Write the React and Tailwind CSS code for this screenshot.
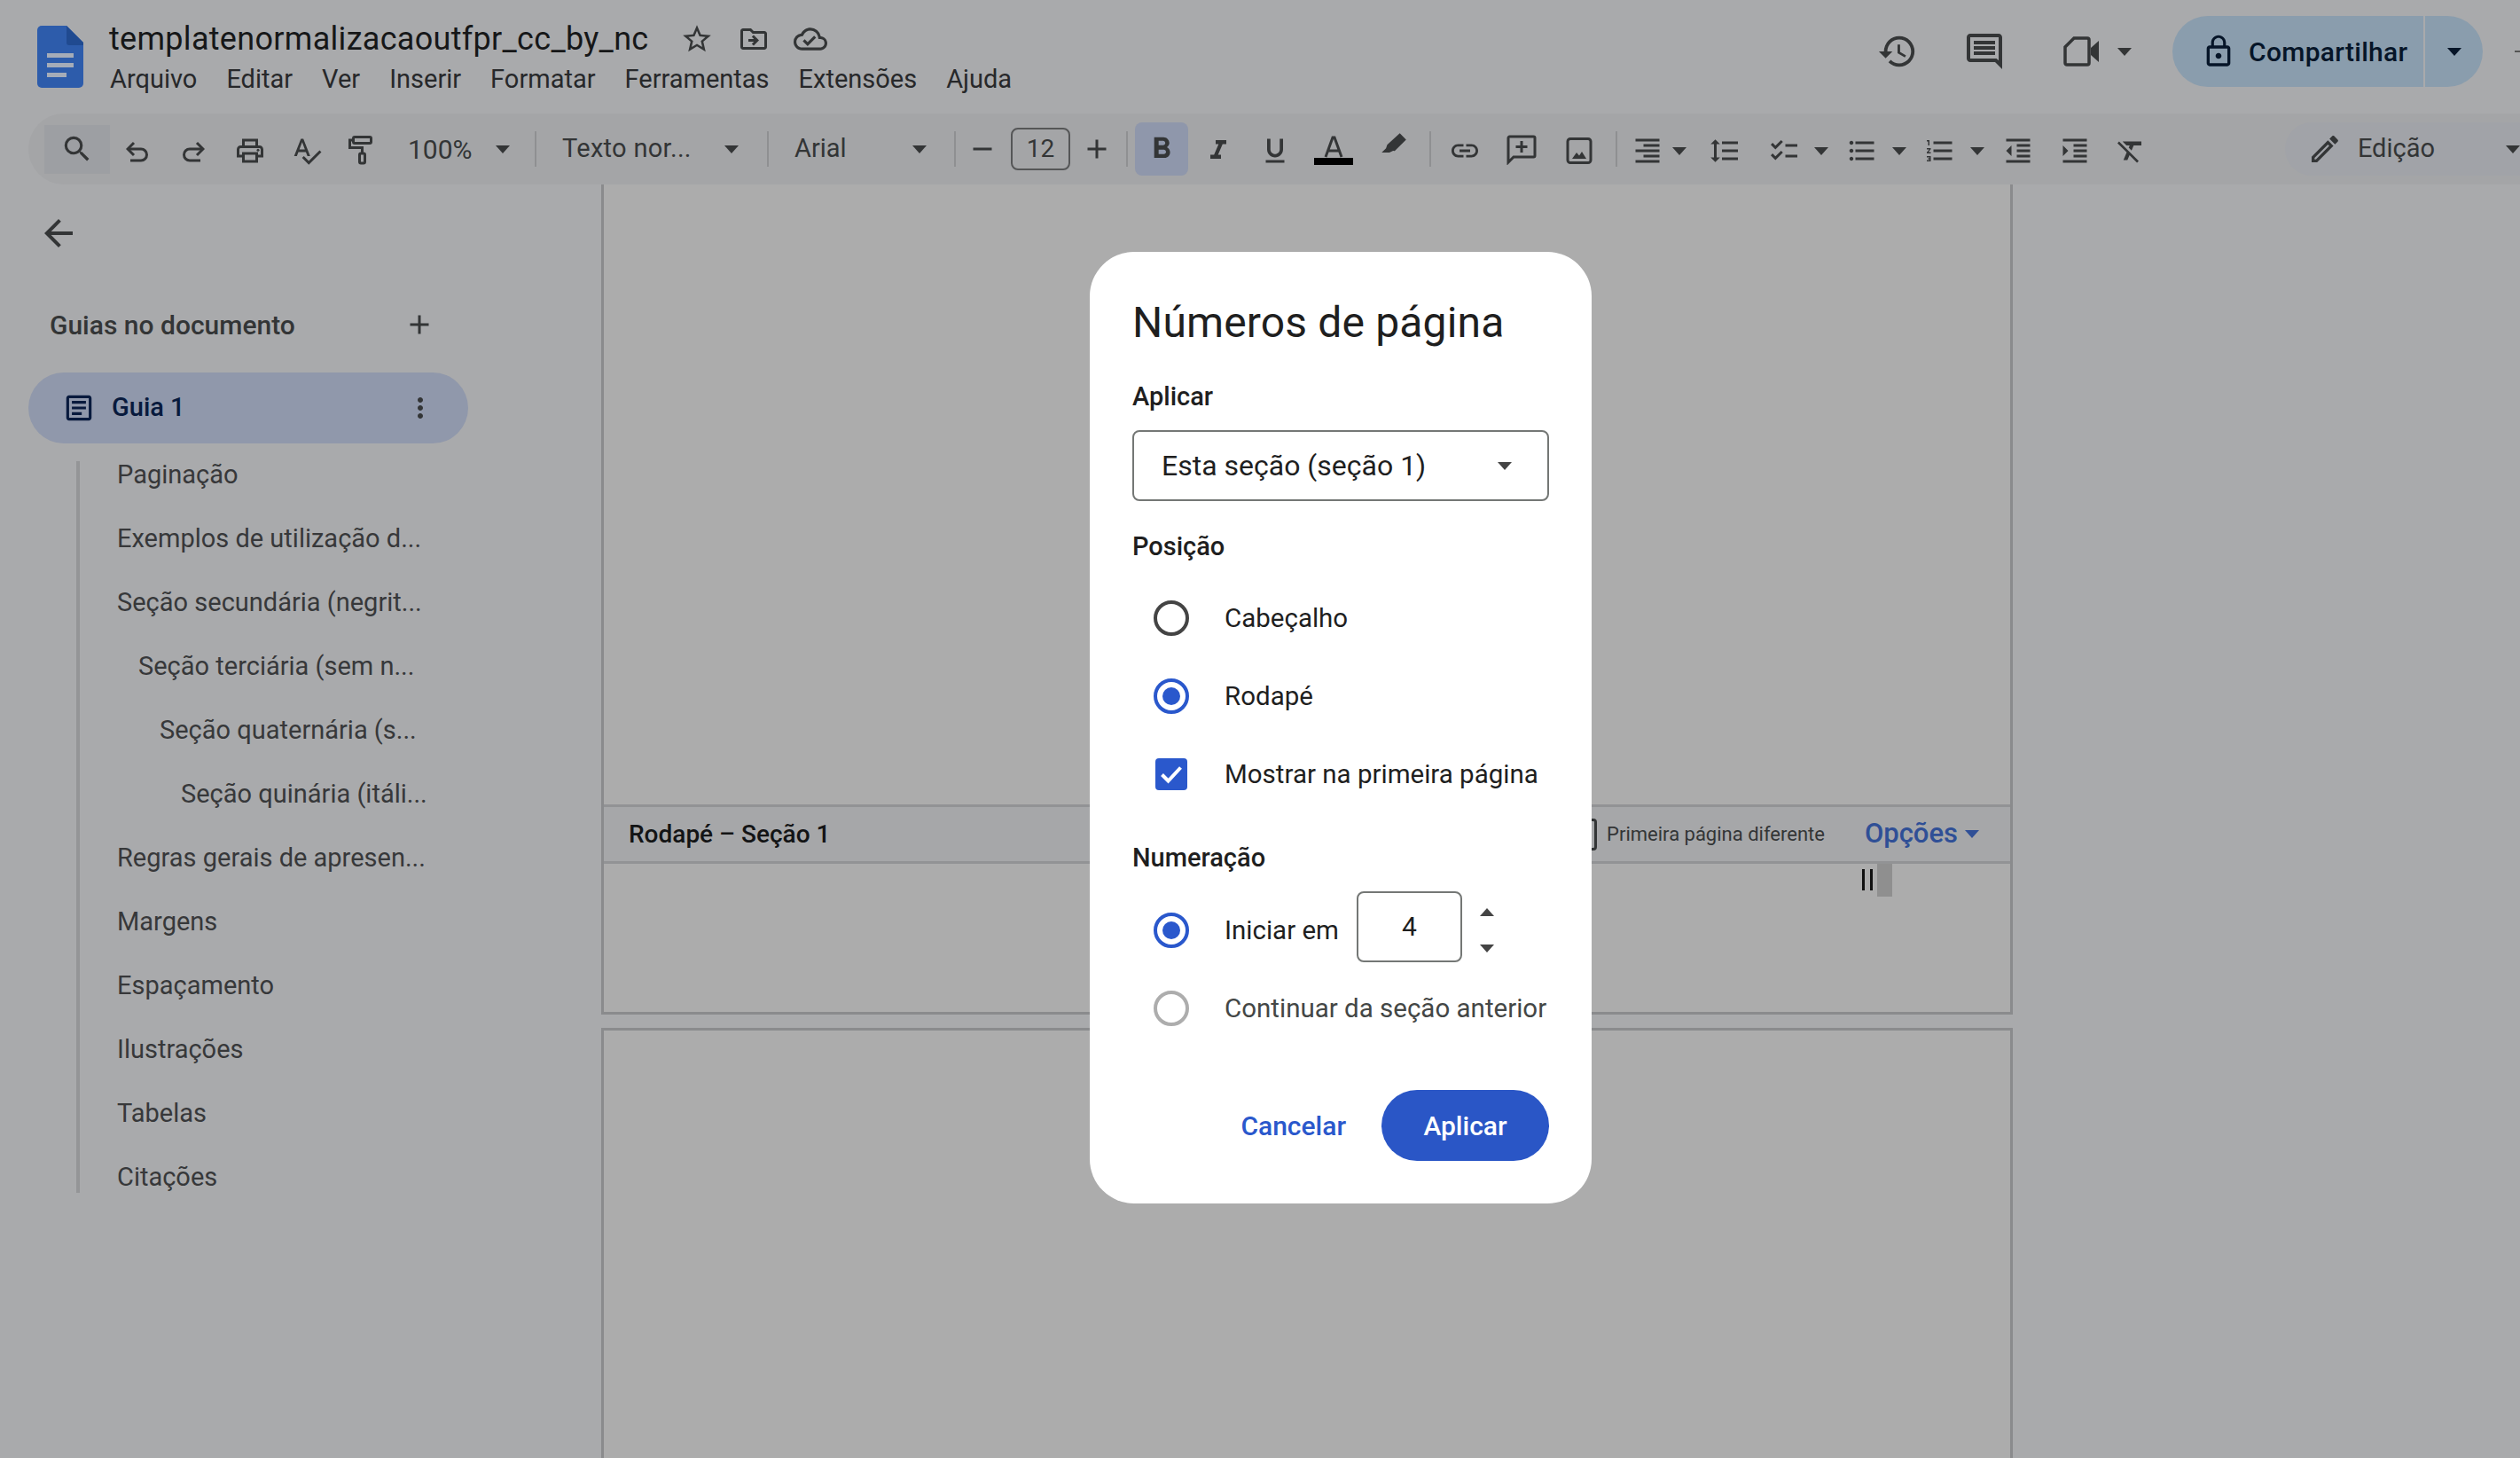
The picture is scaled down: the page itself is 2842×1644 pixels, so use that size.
import React from "react";
import {
  MdSearch, MdOutlinePrint, MdSpellcheck, MdAdd, MdRemove, MdFormatBold, MdFormatItalic,
  MdFormatUnderlined, MdLink, MdFormatAlignRight, MdFormatLineSpacing, MdChecklist, MdFormatListBulleted,
  MdFormatListNumbered, MdFormatIndentDecrease, MdFormatIndentIncrease, MdFormatClear, MdStarBorder,
  MdOutlineDriveFileMove, MdOutlineCloudDone, MdHistory, MdOutlineComment, MdLockOutline, MdOutlineEdit,
  MdArrowBack, MdMoreVert, MdOutlineArticle,
} from "react-icons/md";

const Caret = ({ c = "#333536", up = false }) => (
  <svg width="16" height="9" viewBox="0 0 16 9" className="shrink-0"><path d={up ? "M8 0L16 9H0z" : "M0 0H16L8 9z"} fill={c} /></svg>
);
const Sep = ({ cls = "" }) => <div className={"w-[2px] h-[40px] bg-[#8f9092] shrink-0 " + cls} />;
const Cell = ({ w, cls = "", children }) => (
  <div className={"flex items-center justify-center shrink-0 text-[#333536] " + w + " " + cls}>{children}</div>
);
const T = ({ w, cls = "", children }) => <Cell w={w} cls={"pt-[4px] " + cls}>{children}</Cell>;

const Logo = () => (
  <svg width="52" height="70" viewBox="0 0 52 70" className="shrink-0">
    <path d="M5 0H33L52 19V65a5 5 0 0 1-5 5H5a5 5 0 0 1-5-5V5a5 5 0 0 1 5-5z" fill="#2d5cab" />
    <path d="M33 0L52 19V22H36a3 3 0 0 1-3-3z" fill="#204a90" />
    <rect x="11" y="31" width="30" height="5" fill="#a5acb8" />
    <rect x="11" y="42" width="30" height="5" fill="#a5acb8" />
    <rect x="11" y="53" width="22" height="5" fill="#a5acb8" />
  </svg>
);
const Undo = ({ flip = false }) => (
  <svg width="26" height="24" viewBox="0 0 26 24" fill="none" stroke="#333536" strokeWidth="3" className={flip ? "-scale-x-100" : ""}>
    <path d="M9 2L2 9l7 7" />
    <path d="M2 9H17a6 6 0 0 1 0 13H5" />
  </svg>
);
const Paint = () => (
  <svg width="36" height="36" viewBox="0 0 36 36" fill="none" stroke="#333536" strokeWidth="3">
    <rect x="7.500" y="2.500" width="20" height="7" rx="1.500" />
    <path d="M7 6H3.500v8.500H17.500V20" />
    <rect x="14.500" y="21" width="6" height="11" rx="1.500" />
  </svg>
);
const TextColor = () => (
  <svg width="44" height="36" viewBox="0 0 44 36">
    <path d="M13 27L21 5h2l8 22M16 20h12" fill="none" stroke="#333536" strokeWidth="3" />
    <rect x="0" y="28" width="44" height="8" fill="#000" />
  </svg>
);
const Marker = () => (
  <svg width="32" height="32" viewBox="0 0 36 36">
    <path d="M25.500 1.500L33.500 9.500 19 24l-2-.3-4.700 2.300H2.500l5.500-5.500 1.500-4.500z" fill="#333536" />
  </svg>
);
const AddComment = () => (
  <svg width="36" height="36" viewBox="0 0 36 36" fill="none" stroke="#333536" strokeWidth="3">
    <path d="M3 33V5.500A1.500 1.500 0 0 1 4.500 4h27A1.500 1.500 0 0 1 33 5.500v20a1.500 1.500 0 0 1-1.500 1.500H9z" />
    <path d="M18 9v13M11.500 15.500h13" />
  </svg>
);
const ImageIc = () => (
  <svg width="36" height="36" viewBox="0 0 36 36" fill="none" stroke="#333536" strokeWidth="3">
    <rect x="5" y="4.500" width="26" height="27" rx="3" />
    <path d="M10 27l5-7 3 3.500 3-4.500 5 8z" fill="#333536" stroke="none" />
  </svg>
);
const Camera = () => (
  <svg width="42" height="34" viewBox="0 0 42 34" fill="none" stroke="#333536" strokeWidth="3.500">
    <path d="M12 2H27a2 2 0 0 1 2 2V30a2 2 0 0 1-2 2H4a2 2 0 0 1-2-2V12z" />
    <path d="M31 13L40 5V29L31 21z" fill="#333536" stroke="none" />
  </svg>
);
const Check = () => (
  <svg width="26" height="22" viewBox="0 0 26 22" fill="none" stroke="#fff" strokeWidth="4"><path d="M2.500 11.500L9.500 18.500 23.500 3.500" /></svg>
);

const Radio = ({ on, c = "#444" }) => (
  <div className={"w-[40px] h-[40px] rounded-full border-[4px] flex items-center justify-center shrink-0 " + (on ? "border-[#2a58cc]" : c === "#444" ? "border-[#444444]" : "border-[#adadad]")}>
    {on && <div className="w-[20px] h-[20px] rounded-full bg-[#2a58cc]" />}
  </div>
);

const items = [
  ["Paginação", ""],
  ["Exemplos de utilização d...", ""],
  ["Seção secundária (negrit...", ""],
  ["Seção terciária (sem n...", "pl-[24px]"],
  ["Seção quaternária (s...", "pl-[48px]"],
  ["Seção quinária (itáli...", "pl-[72px]"],
  ["Regras gerais de apresen...", ""],
  ["Margens", ""],
  ["Espaçamento", ""],
  ["Ilustrações", ""],
  ["Tabelas", ""],
  ["Citações", ""],
];

const menu = ["Arquivo", "Editar", "Ver", "Inserir", "Formatar", "Ferramentas", "Extensões", "Ajuda"];

export default function App() {
  const I = 36;
  return (
    <div className="relative w-[2842px] h-[1644px] overflow-hidden bg-[#a9aaac] font-['Roboto',sans-serif] text-[#333536]">
      {/* header */}
      <header className="flex h-[128px] pl-[42px]">
        <div className="mt-[29px]"><Logo /></div>
        <div className="ml-[29px]">
          <div className="flex items-center h-[44px] mt-[22px]">
            <span className="text-[36px] leading-[44px] text-[#161718] tracking-[0.3px]">templatenormalizacaoutfpr_cc_by_nc</span>
            <div className="flex items-center text-[#333536] ml-[36px] gap-[27px]">
              <MdStarBorder size={38} />
              <MdOutlineDriveFileMove size={36} />
              <MdOutlineCloudDone size={38} />
            </div>
          </div>
          <nav className="flex items-center gap-[33px] h-[44px] mt-[2px] text-[29px] text-[#27282a] pl-[1px]">
            {menu.map((m) => <span key={m}>{m}</span>)}
          </nav>
        </div>
        <div className="ml-auto flex items-start">
          <Cell w="w-[60px]" cls="h-[60px] mt-[28px]"><MdHistory size={46} /></Cell>
          <Cell w="w-[60px]" cls="h-[60px] mt-[28px] ml-[38px]"><MdOutlineComment size={48} /></Cell>
          <Cell w="w-[60px]" cls="h-[60px] mt-[28px] ml-[50px]"><Camera /></Cell>
          <div className="h-[60px] mt-[28px] ml-[10px] flex items-center"><Caret /></div>
          <div className="flex items-center ml-[46px] mt-[18px] h-[80px] w-[350px] rounded-[40px] bg-[#8a9dad] text-[#061528]">
            <div className="w-[283px] flex items-center pl-[32px]">
              <MdLockOutline size={40} />
              <span className="ml-[14px] text-[30px] font-medium tracking-[0.3px]">Compartilhar</span>
            </div>
            <div className="w-[2px] h-[80px] bg-[#a9aaac]" />
            <div className="flex-1 flex justify-center"><Caret c="#061528" /></div>
          </div>
          <div className="ml-[36px] mt-[57px] w-[6px] h-[2px] bg-[#555555]" />
        </div>
      </header>

      {/* toolbar */}
      <div className="flex items-center h-[80px] ml-[32px] pl-[18px] rounded-l-[40px] bg-[#a4a5a7] text-[#333536]">
        <Cell w="w-[74px]" cls="h-[55px] bg-[#9d9fa3]"><MdSearch size={38} /></Cell>
        <Cell w="w-[62px]" cls="pt-[6px]"><Undo /></Cell>
        <Cell w="w-[63px]" cls="pt-[6px]"><Undo flip /></Cell>
        <T w="w-[65px]"><MdOutlinePrint size={I} /></T>
        <T w="w-[63px]"><MdSpellcheck size={I} /></T>
        <T w="w-[63px]"><Paint /></T>
        <div className="w-[163px] shrink-0 flex items-center justify-between pl-[20px] pr-[28px] text-[30px]"><span>100%</span><Caret /></div>
        <Sep />
        <div className="w-[260px] shrink-0 flex items-center justify-between pl-[29px] pr-[32px] text-[29px]"><span className="tracking-[0.3px]">Texto nor...</span><Caret /></div>
        <Sep />
        <div className="w-[209px] shrink-0 flex items-center justify-between pl-[29px] pr-[31px] text-[29px]"><span>Arial</span><Caret /></div>
        <Sep />
        <Cell w="w-[60px]"><MdRemove size={I} /></Cell>
        <div className="w-[67px] h-[48px] ml-[2px] shrink-0 flex items-center justify-center rounded-[8px] border-2 border-[#555657] text-[28px]">12</div>
        <Cell w="w-[60px]"><MdAdd size={I} /></Cell>
        <Sep cls="ml-[3px]" />
        <Cell w="w-[60px]" cls="ml-[8px] h-[60px] rounded-[8px] bg-[#8f97ab] text-[#081a3d]"><MdFormatBold size={40} /></Cell>
        <T w="w-[64px]" cls="ml-[2px]"><MdFormatItalic size={I} /></T>
        <T w="w-[64px]"><MdFormatUnderlined size={I} /></T>
        <Cell w="w-[68px]"><TextColor /></Cell>
        <Cell w="w-[68px]" cls="-mt-[6px]"><Marker /></Cell>
        <Sep cls="ml-[6px]" />
        <T w="w-[64px]" cls="ml-[6px]"><MdLink size={I} /></T>
        <Cell w="w-[64px]"><AddComment /></Cell>
        <T w="w-[66px]"><ImageIc /></T>
        <Sep cls="ml-[8px]" />
        <T w="w-[56px]" cls="ml-[6px]"><MdFormatAlignRight size={I} /></T>
        <div className="pt-[4px]"><Caret /></div>
        <T w="w-[60px]" cls="ml-[13px]"><MdFormatLineSpacing size={I} /></T>
        <T w="w-[60px]" cls="ml-[7px]"><MdChecklist size={I} /></T>
        <div className="ml-[4px] pt-[4px]"><Caret /></div>
        <T w="w-[60px]" cls="ml-[8px]"><MdFormatListBulleted size={I} /></T>
        <div className="ml-[4px] pt-[4px]"><Caret /></div>
        <T w="w-[60px]" cls="ml-[8px]"><MdFormatListNumbered size={I} /></T>
        <div className="ml-[4px] pt-[4px]"><Caret /></div>
        <T w="w-[60px]" cls="ml-[8px]"><MdFormatIndentDecrease size={I} /></T>
        <T w="w-[60px]" cls="ml-[4px]"><MdFormatIndentIncrease size={I} /></T>
        <T w="w-[60px]" cls="ml-[3px]"><MdFormatClear size={I} /></T>
        <div className="ml-auto w-[265px] h-[60px] flex items-center rounded-l-[30px] bg-[#a1a3a8] pl-[25px]">
          <MdOutlineEdit size={44} />
          <span className="ml-[17px] text-[29px]">Edição</span>
          <div className="ml-[80px]"><Caret /></div>
        </div>
      </div>

      <div className="flex">
        {/* sidebar */}
        <aside className="w-[678px] shrink-0 pt-[31px]">
          <div className="pl-[42px] text-[#333536]"><MdArrowBack size={48} /></div>
          <div className="flex items-center justify-between h-[48px] mt-[55px] pl-[56px] pr-[187px]">
            <span className="text-[30px] font-medium">Guias no documento</span>
            <MdAdd size={36} />
          </div>
          <div className="flex items-center h-[80px] w-[496px] ml-[32px] mt-[30px] rounded-[40px] bg-[#9098ab] pl-[38px] pr-[36px]">
            <MdOutlineArticle size={38} className="text-[#081a3d]" />
            <span className="ml-[18px] text-[29px] font-medium text-[#081a3d]">Guia 1</span>
            <MdMoreVert size={36} className="ml-auto" />
          </div>
          <div className="ml-[86px] mt-[20px] h-[825px] flow-root border-l-[4px] border-[#949597]">
            <ul className="-mt-[20px] pl-[42px]">
              {items.map(([t, p]) => (
                <li key={t} className={"h-[72px] flex items-center text-[29px] text-[#37383a] " + p}>{t}</li>
              ))}
            </ul>
          </div>
        </aside>

        {/* canvas */}
        <main className="w-[1592px] shrink-0">
          <section className="h-[936px] border-x-[3px] border-b-[3px] border-[#8a8b8d] bg-[#acacac] flex flex-col">
            <div className="h-[699px]" />
            <div className="h-[67px] flex items-center border-y-[3px] border-[#929395] bg-[#a6a7a9] pl-[28px] pr-[35px]">
              <span className="text-[28px] font-medium text-[#131415]">Rodapé – Seção 1</span>
              <div className="ml-auto w-[36px] h-[36px] rounded-[4px] border-[3px] border-[#333536]" />
              <span className="ml-[11px] text-[22px] text-[#333536]">Primeira página diferente</span>
              <span className="ml-[45px] text-[31px] font-medium text-[#2f4f96]">Opções</span>
              <div className="ml-[8px]"><Caret c="#2f4f96" /></div>
            </div>
            <div className="relative flex-1">
              <div className="absolute left-[1419px] top-[6px] w-[3px] h-[24px] bg-[#111]" />
              <div className="absolute left-[1428px] top-[6px] w-[3px] h-[24px] bg-[#111]" />
              <div className="absolute left-[1436px] top-[0px] w-[17px] h-[37px] bg-[#8f8f8f]" />
            </div>
          </section>
          <section className="mt-[15px] h-[600px] border-x-[3px] border-t-[3px] border-[#8a8b8d] bg-[#acacac]" />
        </main>
      </div>

      {/* dialog */}
      <div className="absolute left-[1229px] top-[284px] w-[566px] h-[1073px] rounded-[50px] bg-white px-[48px] pt-[50px] text-[#1f1f1f]">
        <h2 className="h-[60px] flex items-center text-[48px] tracking-[0.15px] text-[#1f1f1f] whitespace-nowrap">Números de página</h2>
        <div className="h-[40px] mt-[34px] flex items-center text-[29px] font-medium">Aplicar</div>
        <div className="h-[80px] mt-[17px] flex items-center rounded-[8px] border-2 border-[#747775] pl-[31px] pr-[40px] text-[32px]">
          <span>Esta seção (seção 1)</span>
          <div className="ml-auto"><Caret c="#444444" /></div>
        </div>
        <div className="h-[40px] mt-[32px] flex items-center text-[29px] font-medium">Posição</div>
        <div className="h-[80px] mt-[20px] flex items-center pl-[24px] gap-[40px] text-[29.5px]"><Radio /><span>Cabeçalho</span></div>
        <div className="h-[80px] mt-[8px] flex items-center pl-[24px] gap-[40px] text-[29.5px]"><Radio on /><span>Rodapé</span></div>
        <div className="h-[80px] mt-[8px] flex items-center pl-[26px] gap-[42px] text-[29.5px]">
          <div className="w-[36px] h-[36px] rounded-[4px] bg-[#2a58cc] flex items-center justify-center"><Check /></div>
          <span className="whitespace-nowrap">Mostrar na primeira página</span>
        </div>
        <div className="h-[40px] mt-[35px] flex items-center text-[29px] font-medium">Numeração</div>
        <div className="h-[80px] mt-[21px] flex items-center pl-[24px] text-[29.5px]">
          <Radio on />
          <span className="ml-[40px] w-[127px] whitespace-nowrap">Iniciar em</span>
          <div className="ml-[22px] mb-[8px] w-[119px] h-[80px] rounded-[8px] border-2 border-[#747775] flex items-center justify-center text-[30px] pb-[2px]">4</div>
          <div className="ml-[20px] mb-[1px] flex flex-col gap-[32px]"><Caret c="#444444" up /><Caret c="#444444" /></div>
        </div>
        <div className="h-[80px] mt-[8px] flex items-center pl-[24px] gap-[40px] text-[29.5px] text-[#444746] whitespace-nowrap"><Radio c="#aaa" /><span>Continuar da seção anterior</span></div>
        <div className="h-[80px] mt-[52px] flex items-center justify-end">
          <span className="text-[30px] font-medium text-[#2a58cc]">Cancelar</span>
          <div className="ml-[40px] w-[189px] h-[80px] rounded-[40px] bg-[#2a56c6] flex items-center justify-center text-[30px] font-medium text-white">Aplicar</div>
        </div>
      </div>
    </div>
  );
}
